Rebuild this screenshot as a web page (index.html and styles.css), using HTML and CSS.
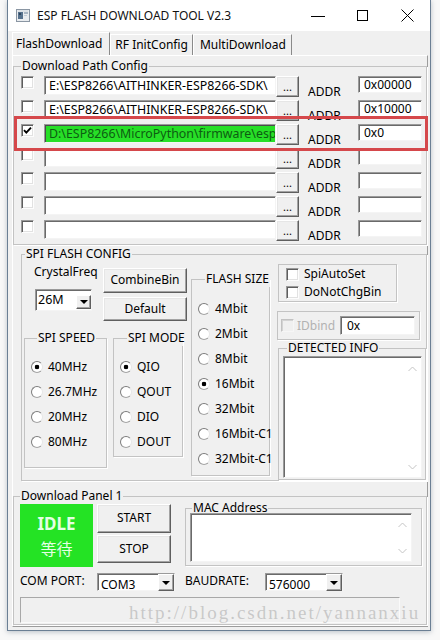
FILE: index.html
```html
<!DOCTYPE html>
<html>
<head>
<meta charset="utf-8">
<title>ESP FLASH DOWNLOAD TOOL V2.3</title>
<link rel="stylesheet" href="styles.css">
</head>
<body>
<div class="window">
  <div class="titlebar">
    <svg class="appicon" viewBox="0 0 14 13"><rect x="0.5" y="0.5" width="13" height="12" fill="#e9ecef" stroke="#8a96a3"/><rect x="2" y="3" width="5" height="7" fill="#56718d"/><rect x="3" y="4" width="2" height="2" fill="#2f465e"/><rect x="8" y="3" width="4" height="2" fill="#a9b6c3"/><rect x="8" y="6" width="3" height="1" fill="#c2ccd6"/><rect x="2" y="1.5" width="10" height="1" fill="#cfd6dd"/></svg>
    <span class="title">ESP FLASH DOWNLOAD TOOL V2.3</span>
    <div class="controls">
      <span class="ctl"><svg width="14" height="12" viewBox="0 0 14 12"><path d="M0 6.5h14" stroke="#000" stroke-width="1"/></svg></span>
      <span class="ctl"><svg width="12" height="12" viewBox="0 0 12 12"><rect x="0.5" y="0.5" width="10" height="10" fill="none" stroke="#000"/></svg></span>
      <span class="ctl"><svg width="13" height="13" viewBox="0 0 13 13"><path d="M0.5 0.5l12 12M12.5 0.5l-12 12" stroke="#000" stroke-width="1"/></svg></span>
    </div>
  </div>

  <div class="tabs">
    <span class="tab active">FlashDownload</span>
    <span class="tab">RF InitConfig</span>
    <span class="tab tab3">MultiDownload</span>
  </div>

  <div class="panel">
    <fieldset class="group g-path">
      <legend>Download Path Config</legend>
      <div class="prow">
        <i class="cb"></i>
        <div class="field path">E:\ESP8266\AITHINKER-ESP8266-SDK\</div>
        <div class="btn browse">...</div>
        <span class="addr-l">ADDR</span>
        <div class="field addr">0x00000</div>
      </div>
      <div class="prow">
        <i class="cb"></i>
        <div class="field path">E:\ESP8266\AITHINKER-ESP8266-SDK\</div>
        <div class="btn browse">...</div>
        <span class="addr-l">ADDR</span>
        <div class="field addr">0x10000</div>
      </div>
      <div class="prow">
        <i class="cb checked"><svg width="11" height="11" viewBox="0 0 11 11"><path d="M2 5.2l2.3 2.4L9 2.6" fill="none" stroke="#000" stroke-width="1.9"/></svg></i>
        <div class="field path green">D:\ESP8266\MicroPython\firmware\esp</div>
        <div class="btn browse">...</div>
        <span class="addr-l">ADDR</span>
        <div class="field addr">0x0</div>
      </div>
      <div class="prow">
        <i class="cb"></i>
        <div class="field path"></div>
        <div class="btn browse">...</div>
        <span class="addr-l">ADDR</span>
        <div class="field addr"></div>
      </div>
      <div class="prow">
        <i class="cb"></i>
        <div class="field path"></div>
        <div class="btn browse">...</div>
        <span class="addr-l">ADDR</span>
        <div class="field addr"></div>
      </div>
      <div class="prow">
        <i class="cb"></i>
        <div class="field path"></div>
        <div class="btn browse">...</div>
        <span class="addr-l">ADDR</span>
        <div class="field addr"></div>
      </div>
      <div class="prow">
        <i class="cb"></i>
        <div class="field path"></div>
        <div class="btn browse">...</div>
        <span class="addr-l">ADDR</span>
        <div class="field addr"></div>
      </div>
    </fieldset>

    <fieldset class="group g-spi">
      <legend>SPI FLASH CONFIG</legend>
      <div class="spi">
        <div class="colA">
          <div class="topA">
            <div class="crystal">
              <div class="lbl">CrystalFreq</div>
              <div class="select s26"><span class="val">26M</span><i class="arrow"></i></div>
            </div>
            <div class="btns">
              <div class="btn b-combine">CombineBin</div>
              <div class="btn b-default">Default</div>
            </div>
          </div>
          <div class="botA">
            <fieldset class="group g-speed">
              <legend>SPI SPEED</legend>
              <div class="radio"><i class="rd on"></i>40MHz</div>
              <div class="radio"><i class="rd"></i>26.7MHz</div>
              <div class="radio"><i class="rd"></i>20MHz</div>
              <div class="radio"><i class="rd"></i>80MHz</div>
            </fieldset>
            <fieldset class="group g-mode">
              <legend>SPI MODE</legend>
              <div class="radio"><i class="rd on"></i>QIO</div>
              <div class="radio"><i class="rd"></i>QOUT</div>
              <div class="radio"><i class="rd"></i>DIO</div>
              <div class="radio"><i class="rd"></i>DOUT</div>
            </fieldset>
          </div>
        </div>
        <fieldset class="group g-size">
          <legend>FLASH SIZE</legend>
          <div class="radio"><i class="rd"></i>4Mbit</div>
          <div class="radio"><i class="rd"></i>2Mbit</div>
          <div class="radio"><i class="rd"></i>8Mbit</div>
          <div class="radio"><i class="rd on"></i>16Mbit</div>
          <div class="radio"><i class="rd"></i>32Mbit</div>
          <div class="radio"><i class="rd"></i>16Mbit-C1</div>
          <div class="radio"><i class="rd"></i>32Mbit-C1</div>
        </fieldset>
        <div class="colC">
          <div class="box autoset">
            <div class="chk"><i class="cb"></i>SpiAutoSet</div>
            <div class="chk"><i class="cb"></i>DoNotChgBin</div>
          </div>
          <div class="box idbind">
            <i class="cb dis"></i><span class="dis-t">IDbind</span>
            <div class="field idf">0x</div>
          </div>
          <fieldset class="group g-det">
            <legend>DETECTED INFO</legend>
            <div class="field textarea ta-det">
              <div class="scroll">
                <svg width="9" height="6" viewBox="0 0 9 6"><path d="M0.5 5L4.5 1l4 4" fill="none" stroke="#c4c4c4"/></svg>
                <svg width="9" height="6" viewBox="0 0 9 6"><path d="M0.5 1l4 4 4-4" fill="none" stroke="#c4c4c4"/></svg>
              </div>
            </div>
          </fieldset>
        </div>
      </div>
    </fieldset>

    <fieldset class="group g-dl">
      <legend>Download Panel 1</legend>
      <div class="dlrow">
        <div class="idle"><b>IDLE</b><span>等待</span></div>
        <div class="ssbtns">
          <div class="btn b-start">START</div>
          <div class="btn b-stop">STOP</div>
        </div>
        <fieldset class="group g-mac">
          <legend>MAC Address</legend>
          <div class="field textarea ta-mac">
            <div class="scroll">
              <svg width="9" height="6" viewBox="0 0 9 6"><path d="M0.5 5L4.5 1l4 4" fill="none" stroke="#c4c4c4"/></svg>
              <svg width="9" height="6" viewBox="0 0 9 6"><path d="M0.5 1l4 4 4-4" fill="none" stroke="#c4c4c4"/></svg>
            </div>
          </div>
        </fieldset>
      </div>
      <div class="comrow">
        <span class="lbl-com">COM PORT:</span>
        <div class="select s-com"><span class="val">COM3</span><i class="arrow"></i></div>
        <span class="lbl-baud">BAUDRATE:</span>
        <div class="select s-baud"><span class="val">576000</span><i class="arrow"></i></div>
      </div>
      <div class="progress"></div>
    </fieldset>
  </div>

  <div class="redbox"></div>
  <div class="watermark">http://blog.csdn.net/yannanxiu</div>
</div>
</body>
</html>
```
FILE: styles.css
```css
* { box-sizing: border-box; }
html, body { margin: 0; padding: 0; }
body {
  width: 440px;
  height: 640px;
  overflow: hidden;
  background: #f8f8f8;
  font-family: "Noto Sans", "Open Sans", "Noto Sans CJK SC", sans-serif;
  font-size: 12px;
  line-height: 16px;
  color: #000;
}

.window {
  position: relative;
  margin-left: 7px;
  width: 424px;
  height: 631px;
  background: #f0f0f0;
  border: 1px solid #6b7f94;
  border-top: 0;
  box-shadow: 0 1px 5px rgba(70, 90, 110, 0.35);
  overflow: hidden;
}

/* title bar */
.titlebar {
  height: 31px;
  background: #fff;
  display: flex;
  align-items: center;
  padding-left: 8px;
}
.appicon { width: 14px; height: 13px; margin-top: -1px; }
.title { margin-left: 7px; font-size: 12px; line-height: 16px; color: #111; }
.controls { margin-left: auto; display: flex; height: 31px; }
.ctl { width: 45px; display: flex; align-items: center; justify-content: center; }

/* tabs */
.tabs {
  display: flex;
  align-items: flex-end;
  height: 24px;
  padding-left: 4px;
}
.tab {
  height: 21px;
  line-height: 19px;
  padding: 0 4px;
  border-top: 1px solid #fff;
  border-left: 1px solid #fff;
  border-right: 1px solid #8a8a8a;
}
.tab.active { height: 23px; line-height: 21px; padding: 0 7px 0 3px; }
.tab3 { padding: 0 5px 0 6px; }

/* panel */
.panel {
  margin: 0 2px 0 4px;
  height: 572px;
  border: 1px solid;
  border-color: #fff #9c9c9c #9c9c9c #fff;
}

/* group boxes */
.group {
  margin: 0;
  padding: 0;
  min-width: 0;
  border: 1px solid #c3c3c3;
  box-shadow: 1px 1px 0 #fff;
}
.group > legend {
  padding: 0 1px;
  font-size: 12px;
  line-height: 16px;
  white-space: nowrap;
}

.g-path { margin-top: 2px; width: 414px; padding-top: 2px; }
.g-path > legend { margin-left: 7px; }

/* common controls */
.cb {
  display: block;
  flex: none;
  width: 13px;
  height: 13px;
  background: #fff;
  border: 1px solid;
  border-color: #9a9a9a #fdfdfd #fdfdfd #9a9a9a;
  box-shadow: inset 1px 1px 0 #5e5e5e, inset -1px -1px 0 #e2e2e2;
  position: relative;
}
.cb svg { position: absolute; left: 0; top: 0; }
.cb.dis {
  background: transparent;
  border-color: #c2c2c2 #f6f6f6 #f6f6f6 #c2c2c2;
  box-shadow: inset 1px 1px 0 #d4d4d4;
}

.field {
  background: #fff;
  border: 1px solid;
  border-color: #9a9a9a #f4f4f4 #f4f4f4 #9a9a9a;
  box-shadow: inset 1px 1px 0 #6a6a6a;
  white-space: nowrap;
  overflow: hidden;
}

.btn {
  background: #f0f0f0;
  border: 1px solid;
  border-color: #fff #5f5f5f #5f5f5f #fff;
  box-shadow: inset -1px -1px 0 #a3a3a3, inset 1px 1px 0 #e6e6e6;
  text-align: center;
}

.rd {
  display: block;
  flex: none;
  width: 12px;
  height: 12px;
  border-radius: 50%;
  border: 1px solid;
  border-color: #7c7c7c #e6e6e6 #a4a4a4 #7c7c7c;
  background: #fff;
}
.rd.on { background: radial-gradient(circle at 50% 50%, #000 0 2px, #fff 2.6px); }

.radio {
  display: flex;
  align-items: center;
  gap: 5px;
  height: 25px;
  white-space: nowrap;
}

/* path rows */
.prow { display: flex; height: 24px; }
.prow .cb { margin-left: 7px; }
.path {
  margin-left: 10px;
  width: 232px;
  height: 19px;
  padding: 1px 0 0 4px;
  line-height: 16px;
  font-size: 12.4px;
}
.path.green { background: #27df27; color: #0d5c12; box-shadow: inset 1px 1px 0 #4b4b4b; }
.browse {
  width: 23px;
  height: 21px;
  line-height: 20px;
  font-size: 11px;
  flex: none;
}
.addr-l { margin-left: 9px; width: 50px; padding-top: 8px; flex: none; }
.addr {
  width: 64px;
  height: 17px;
  padding: 1px 0 0 5px;
  line-height: 14px;
}

/* SPI flash config */
.g-spi { margin: 1px 0 0 8px; width: 406px; }
.g-spi > legend { margin-left: 3px; }
.spi { display: flex; height: 218px; }
.colA { width: 169px; flex: none; }
.topA { display: flex; }
.crystal { margin-left: 12px; width: 69px; }
.lbl { margin-top: 2px; }
.select {
  display: flex;
  background: #fff;
  border: 1px solid;
  border-color: #9a9a9a #f4f4f4 #f4f4f4 #9a9a9a;
  box-shadow: inset 1px 1px 0 #6a6a6a;
}
.select .val { padding-left: 3px; }
.arrow {
  display: block;
  margin-left: auto;
  width: 15px;
  background: #f0f0f0;
  border: 1px solid;
  border-color: #fff #5f5f5f #5f5f5f #fff;
  box-shadow: inset -1px -1px 0 #a3a3a3;
  position: relative;
}
.arrow::after {
  content: "";
  position: absolute;
  left: 50%;
  top: 50%;
  margin: -2px 0 0 -4px;
  border-style: solid;
  border-width: 4px 4px 0 4px;
  border-color: #000 transparent transparent transparent;
}
.s26 { margin: 9px 0 0 1px; width: 57px; height: 22px; }
.s26 .val { padding: 2px 0 0 2px; font-size: 12.5px; }
.s26 .arrow { margin: 5px 0 1px auto; height: 14px; }

.btns { margin-top: 6px; width: 84px; }
.b-combine { height: 25px; line-height: 22px; }
.b-default { margin-top: 4px; height: 24px; line-height: 22px; }

.botA { display: flex; margin-top: 9px; align-items: flex-start; }
.g-speed { margin-left: 2px; width: 83px; padding: 8px 0 13px 6px; }
.g-speed > legend { margin-left: 6px; }
.g-mode { margin-left: 6px; width: 70px; padding: 8px 0 2px 6px; }
.g-mode > legend { margin-left: 7px; }

.g-size { margin-top: 9px; width: 79px; height: 205px; padding: 9px 0 4px 6px; flex: none; align-self: flex-start; }
.g-size > legend { margin-left: 7px; }

.colC { width: 156px; flex: none; }
.box {
  border: 1px solid #c3c3c3;
  box-shadow: 1px 1px 0 #fff;
}
.autoset { margin: 2px 0 0 8px; width: 119px; height: 38px; padding-left: 7px; }
.chk { display: flex; align-items: center; gap: 5px; height: 18px; }
.idbind {
  margin: 9px 0 0 7px;
  width: 143px;
  height: 29px;
  display: flex;
  align-items: center;
  padding-left: 3px;
}
.dis-t { margin-left: 3px; color: #b2b2b2; }
.idf {
  margin-left: auto;
  margin-right: 4px;
  width: 75px;
  height: 19px;
  padding: 1px 0 0 6px;
  line-height: 16px;
}
.g-det { margin-left: 8px; width: 148px; padding-bottom: 1px; }
.g-det > legend { margin-left: 8px; }
.textarea { display: flex; justify-content: flex-end; }
.scroll {
  width: 17px;
  display: flex;
  flex-direction: column;
  align-items: center;
  justify-content: space-between;
  padding: 9px 0 7px;
}
.ta-det { margin-left: 4px; width: 139px; height: 122px; }

/* download panel */
.g-dl { margin-top: 7px; width: 414px; padding-bottom: 1px; }
.g-dl > legend { margin-left: 6px; }
.dlrow { display: flex; height: 63px; padding-left: 6px; align-items: flex-start; }
.idle {
  width: 73px;
  height: 63px;
  background: #24e324;
  color: #e4ffe4;
  display: flex;
  flex-direction: column;
  align-items: center;
  padding-top: 8px;
}
.idle b { font-size: 17px; line-height: 24px; font-weight: 700; }
.idle span { font-size: 16px; line-height: 24px; font-family: "Noto Sans CJK SC", sans-serif; }
.ssbtns { margin-left: 4px; width: 74px; }
.b-start { height: 29px; line-height: 26px; }
.b-stop { margin-top: 2px; height: 28px; line-height: 26px; }
.g-mac { margin: -4px 0 0 14px; width: 237px; padding-bottom: 3px; }
.g-mac > legend { margin-left: 6px; }
.ta-mac { margin: -3px 0 0 4px; width: 222px; height: 49px; }
.ta-mac .scroll { padding: 8px 0 7px; }

.comrow { display: flex; margin-top: 6px; height: 18px; padding-left: 6px; }
.lbl-com { width: 77px; }
.lbl-baud { margin-left: 10px; width: 80px; }
.s-com, .s-baud { width: 78px; height: 18px; }
.s-com .val, .s-baud .val { padding-top: 3px; line-height: 16px; }
.s-com .arrow, .s-baud .arrow { height: 17px; width: 16px; }

.progress {
  margin: 6px 0 0 6px;
  width: 380px;
  height: 26px;
  border: 1px solid;
  border-color: #a8a8a8 #fafafa #fafafa #a8a8a8;
}

/* overlays */
.redbox {
  position: absolute;
  left: 6px;
  top: 116px;
  width: 414px;
  height: 35px;
  border: 3px solid #d5484b;
}
.watermark {
  position: absolute;
  left: 121px;
  top: 603px;
  font-family: "Liberation Serif", serif;
  font-size: 19px;
  line-height: 20px;
  letter-spacing: 2px;
  white-space: nowrap;
  color: rgba(160, 160, 160, 0.5);
}
```
